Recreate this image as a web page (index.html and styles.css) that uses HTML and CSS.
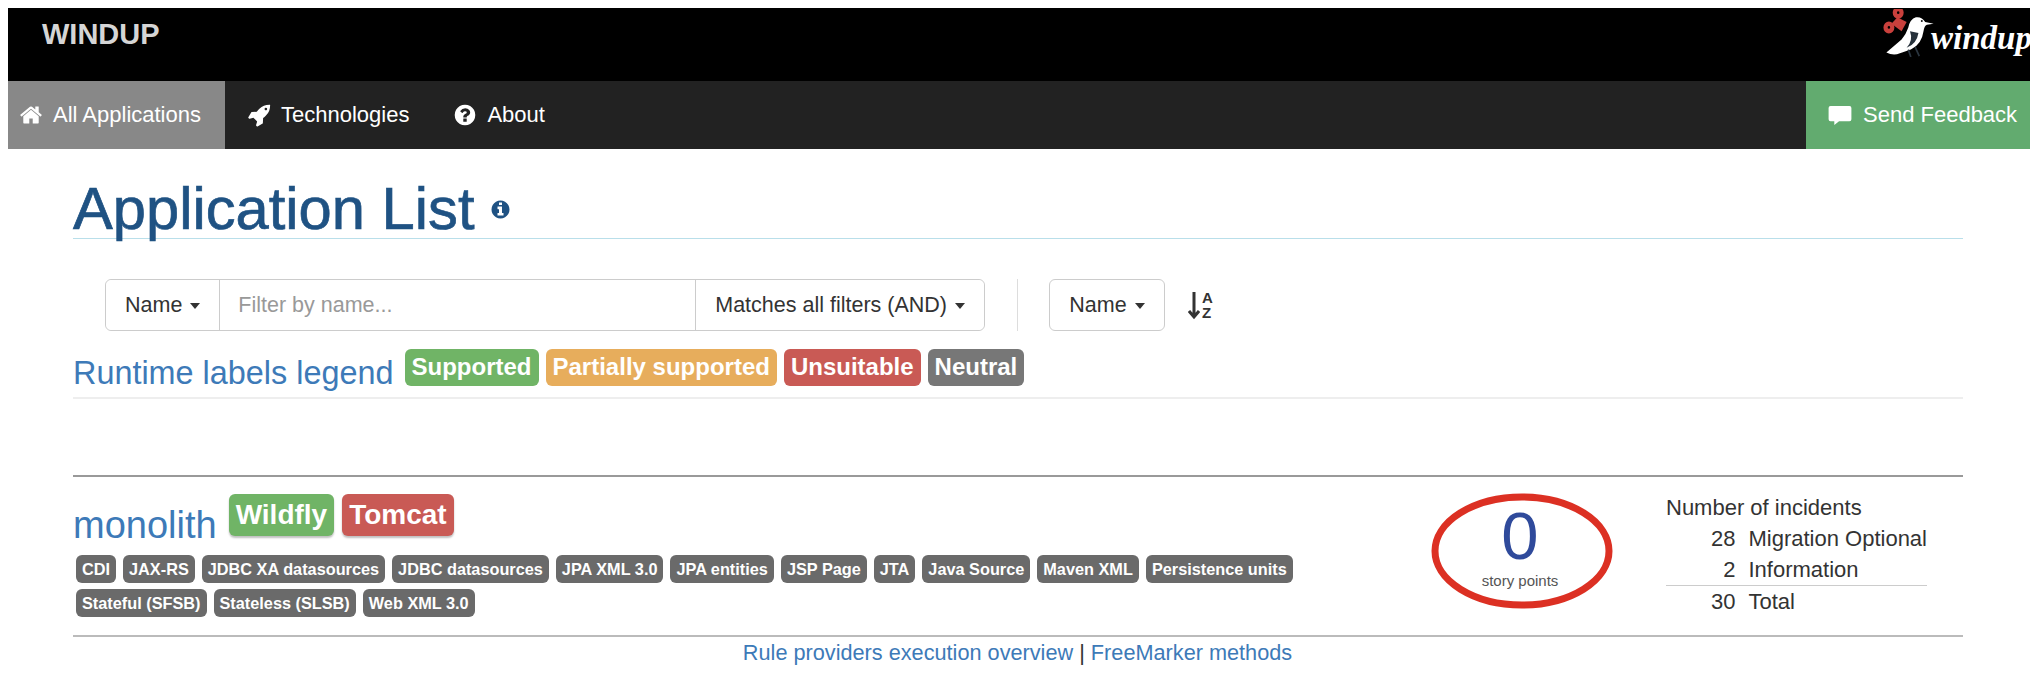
FILE: index.html
```html
<!DOCTYPE html>
<html lang="en">
<head>
    <meta charset="UTF-8">
    <title>Application List</title>
    <link rel="stylesheet" href="styles.css">
</head>
<body>
    <header class="topbar">
        <span class="brand">WINDUP</span>
        <div class="logo">
            <svg class="logo-bird" viewBox="0 0 64 52" width="54" height="48" preserveAspectRatio="none">
                <g fill="none" stroke="#c9403c" stroke-width="5">
                    <circle cx="18" cy="4" r="4"/>
                    <circle cx="7" cy="20" r="4"/>
                </g>
                <path d="M10 16 L17 9 L28 14 L22 24 Z" fill="#c9403c"/>
                <path d="M60 16 L50 14 Q46 8 39 9 Q32 11 30 20 Q27 28 22 33 L4 47 Q12 51 20 48 L33 44 Q46 38 48 24 Q49 18 52 17 Z" fill="#fff"/>
                <path d="M30 44 L33 52 M38 41 L43 51" stroke="#2b3640" stroke-width="2" fill="none"/>
                <path d="M32 24 Q36 34 28 42 Q40 38 42 26 Z" fill="#26313b"/>
                <circle cx="46" cy="13" r="1.2" fill="#111"/>
            </svg>
            <span class="logo-word">windup</span>
        </div>
    </header>

    <nav class="mainnav">
        <a class="nav-item active" href="#">
            <svg class="icon" viewBox="0 0 1792 1792"><path d="M1472 992v480q0 26-19 45t-45 19h-384v-384h-256v384h-384q-26 0-45-19t-19-45v-480q0-1 .5-3t.5-3l575-474 575 474q1 2 1 6zm223-69l-62 74q-8 9-21 11h-3q-13 0-21-7l-692-577-692 577q-12 8-24 7-13-2-21-11l-62-74q-8-10-7-23.500t11-21.500l719-599q32-26 76-26t76 26l244 204v-195q0-14 9-23t23-9h192q14 0 23 9t9 23v408l219 182q10 8 11 21.500t-7 23.500z"/></svg>
            All Applications
        </a>
        <a class="nav-item" href="#">
            <svg class="icon" viewBox="0 0 1792 1792"><path d="M1504 448q0-40-28-68t-68-28-68 28-28 68 28 68 68 28 68-28 28-68zm224-288q0 249-75.500 430.500t-253.500 360.500q-81 80-195 176l-20 379q-2 16-16 26l-384 224q-7 4-16 4-12 0-23-9l-64-64q-13-14-8-32l85-276-281-281-276 85q-3 1-9 1-14 0-23-9l-64-64q-17-19-5-39l224-384q10-14 26-16l379-20q96-114 176-195 188-187 358-258t431-71q14 0 24 9.500t10 22.500z"/></svg>
            Technologies
        </a>
        <a class="nav-item" href="#">
            <svg class="icon" viewBox="0 0 1792 1792"><path d="M1024 1376v-192q0-14-9-23t-23-9h-192q-14 0-23 9t-9 23v192q0 14 9 23t23 9h192q14 0 23-9t9-23zm256-672q0-88-55.500-163t-138.500-116-170-41q-243 0-371 213-15 24 8 42l132 100q7 6 19 6 16 0 25-12 53-68 86-92 34-24 86-24 48 0 85.500 26t37.500 59q0 38-20 61t-68 45q-63 28-115.500 86.500t-52.500 125.500v36q0 14 9 23t23 9h192q14 0 23-9t9-23q0-19 21.500-49.500t54.500-49.500q32-18 49-28.500t46-35 44.500-48 28-60.500 12.500-81zm384 192q0 209-103 385.500t-279.500 279.500-385.500 103-385.500-103-279.500-279.500-103-385.500 103-385.500 279.500-279.500 385.500-103 385.500 103 279.500 279.500 103 385.500z"/></svg>
            About
        </a>
        <a class="nav-item feedback" href="#">
            <svg class="icon" viewBox="0 0 24 20"><path d="M2 0h20a2 2 0 0 1 2 2v12a2 2 0 0 1-2 2H11l-5 4v-4H2a2 2 0 0 1-2-2V2a2 2 0 0 1 2-2z"/></svg>
            Send Feedback
        </a>
    </nav>

    <main class="content">
        <div class="page-header">
            <h1>Application List</h1>
            <svg class="info-icon" viewBox="0 0 1792 1792"><path d="M1152 1376v-160q0-14-9-23t-23-9h-96v-512q0-14-9-23t-23-9h-320q-14 0-23 9t-9 23v160q0 14 9 23t23 9h96v320h-96q-14 0-23 9t-9 23v160q0 14 9 23t23 9h448q14 0 23-9t9-23zm-128-896v-160q0-14-9-23t-23-9h-192q-14 0-23 9t-9 23v160q0 14 9 23t23 9h192q14 0 23-9t9-23zm640 416q0 209-103 385.500t-279.500 279.500-385.500 103-385.500-103-279.500-279.500-103-385.500 103-385.500 279.500-279.500 385.500-103 385.500 103 279.500 279.500 103 385.500z"/></svg>
        </div>

        <div class="toolbar">
            <div class="filter-group">
                <button class="btn">Name <span class="caret"></span></button>
                <input class="filter-input" type="text" placeholder="Filter by name...">
                <button class="btn">Matches all filters (AND) <span class="caret"></span></button>
            </div>
            <div class="divider"></div>
            <button class="btn single">Name <span class="caret"></span></button>
            <div class="sort-icon">
                <svg viewBox="0 0 12 30" width="12" height="30"><path d="M6 2v24M1 21l5 6 5-6" fill="none" stroke="#333" stroke-width="3"/></svg>
                <span class="sort-letters">A<br>Z</span>
            </div>
        </div>

        <div class="legend">
            <a class="legend-title" href="#">Runtime labels legend</a>
            <span class="label green">Supported</span>
            <span class="label orange">Partially supported</span>
            <span class="label red">Unsuitable</span>
            <span class="label grey">Neutral</span>
        </div>

        <div class="app-row">
            <div class="app-main">
                <div class="app-title">
                    <a class="app-name" href="#">monolith</a>
                    <span class="label big green">Wildfly</span>
                    <span class="label big red">Tomcat</span>
                </div>
                <div class="tags">
                    <span class="tag">CDI</span>
                    <span class="tag">JAX-RS</span>
                    <span class="tag">JDBC XA datasources</span>
                    <span class="tag">JDBC datasources</span>
                    <span class="tag">JPA XML 3.0</span>
                    <span class="tag">JPA entities</span>
                    <span class="tag">JSP Page</span>
                    <span class="tag">JTA</span>
                    <span class="tag">Java Source</span>
                    <span class="tag">Maven XML</span>
                    <span class="tag">Persistence units</span>
                    <span class="tag">Stateful (SFSB)</span>
                    <span class="tag">Stateless (SLSB)</span>
                    <span class="tag">Web XML 3.0</span>
                </div>
            </div>
            <div class="points">
                <span class="points-value">0</span>
                <span class="points-label">story points</span>
                <svg class="points-ring" viewBox="0 0 182 116" width="182" height="116"><ellipse cx="91" cy="58" rx="87" ry="54" fill="none" stroke="#dc3023" stroke-width="7"/></svg>
            </div>
            <div class="incidents">
                <div class="incidents-title">Number of incidents</div>
                <table>
                    <tr><td class="num">28</td><td>Migration Optional</td></tr>
                    <tr><td class="num">2</td><td>Information</td></tr>
                    <tr class="total"><td class="num">30</td><td>Total</td></tr>
                </table>
            </div>
        </div>

        <footer class="links">
            <a href="#">Rule providers execution overview</a> | <a href="#">FreeMarker methods</a>
        </footer>
    </main>
</body>
</html>
```

FILE: styles.css
```css
html, body {
    height: 666px;
    overflow: hidden;
}
body {
    margin: 8px 0 0 8px;
    font-family: "Liberation Sans", Arial, sans-serif;
    font-size: 22px;
    line-height: 1.43;
    color: #333;
    background-color: #fff;
}
a {
    color: #3d7ab8;
    text-decoration: none;
}

.topbar {
    height: 73px;
    background-color: #000;
    display: flex;
    justify-content: space-between;
    box-shadow: 0 -1px 0 #aaa;
}
.brand {
    margin: 11px 0 0 34px;
    font-size: 29px;
    line-height: 30px;
    font-weight: bold;
    color: #d5d5d5;
}
.logo {
    display: flex;
    align-items: flex-start;
    width: 140px;
    margin-right: 7px;
}
.logo-bird {
    flex-shrink: 0;
    margin-top: 1px;
}
.logo-word {
    margin: 12px 0 0 -6px;
    font-family: "Liberation Serif", serif;
    font-style: italic;
    font-weight: bold;
    font-size: 33px;
    line-height: 36px;
    color: #fff;
    white-space: nowrap;
}

.mainnav {
    height: 68px;
    background-color: #222;
    display: flex;
}
.nav-item {
    display: flex;
    align-items: center;
    padding: 0 22px;
    color: #fff;
    white-space: nowrap;
}
.nav-item .icon {
    flex-shrink: 0;
    width: 24px;
    height: 24px;
    margin-right: 10px;
    fill: #fff;
}
.nav-item.active {
    width: 217px;
    padding: 0 0 0 11px;
    box-sizing: border-box;
    background-color: #888;
}
.nav-item.feedback {
    margin-left: auto;
    width: 224px;
    box-sizing: border-box;
    background-color: #62ab6f;
}
.nav-item.feedback .icon {
    height: 19px;
    margin-right: 11px;
}

.content {
    width: 1890px;
    margin-left: 65px;
}
.page-header {
    display: flex;
    align-items: flex-end;
    height: 89px;
    border-bottom: 1px solid #b9dfea;
}
.page-header h1 {
    margin: 0 0 -2px;
    font-size: 59.7px;
    font-weight: normal;
    -webkit-text-stroke: 0.7px #1f5283;
    color: #1f5283;
    line-height: 62px;
}
.info-icon {
    width: 21px;
    height: 21px;
    margin: 0 0 18px 16px;
    fill: #1f5283;
}

.toolbar {
    display: flex;
    align-items: center;
    margin: 40px 0 0 32px;
    height: 52px;
}
.filter-group {
    display: flex;
    width: 880px;
    height: 52px;
    box-sizing: border-box;
    border: 1px solid #ccc;
    border-radius: 6px;
}
.btn {
    padding: 0 19px;
    border: none;
    background: #fff;
    font-family: inherit;
    font-size: 21.5px;
    color: #333;
    border-radius: 6px;
    white-space: nowrap;
}
.btn.single {
    width: 116px;
    height: 52px;
    padding: 0;
    border: 1px solid #ccc;
}
.caret {
    display: inline-block;
    margin-left: 2px;
    vertical-align: middle;
    border-top: 6px solid #333;
    border-left: 5px solid transparent;
    border-right: 5px solid transparent;
}
.filter-input {
    flex: 1;
    min-width: 0;
    padding: 0 18px;
    border: none;
    border-left: 1px solid #ccc;
    border-right: 1px solid #ccc;
    font-family: inherit;
    font-size: 21.5px;
    color: #333;
}
.filter-input::placeholder {
    color: #999;
}
.divider {
    width: 1px;
    height: 52px;
    margin: 0 31px 0 32px;
    background-color: #ddd;
}
.sort-icon {
    display: flex;
    align-items: center;
    margin-left: 23px;
    color: #333;
}
.sort-letters {
    margin-left: 2px;
    font-size: 15px;
    line-height: 15px;
    font-weight: bold;
}

.legend {
    display: flex;
    align-items: flex-start;
    gap: 7px;
    height: 48px;
    margin-top: 18px;
    border-bottom: 2px solid #eee;
}
.legend-title {
    font-size: 32.4px;
    line-height: 48px;
    margin-right: 4px;
}
.label {
    padding: 0 7px;
    height: 37px;
    line-height: 36px;
    font-size: 24px;
    font-weight: bold;
    color: #fff;
    border-radius: 6px;
}
.label.green { background-color: #70b466; }
.label.orange { background-color: #e7ad5c; }
.label.red { background-color: #c95a55; }
.label.grey { background-color: #777; }

.app-row {
    display: flex;
    height: 158px;
    margin-top: 76px;
    border-top: 2px solid #999;
    border-bottom: 2px solid #bbb;
}
.app-main {
    flex: 1;
    min-width: 0;
}
.app-title {
    display: flex;
    align-items: flex-start;
    gap: 8px;
    margin-top: 17px;
}
.app-name {
    font-size: 38px;
    line-height: 46px;
    margin-top: 8px;
    margin-right: 4px;
}
.label.big {
    height: 42px;
    line-height: 41px;
    font-size: 28px;
    padding: 0 7px;
    box-shadow: 0 2px 2px rgba(0, 0, 0, 0.25);
}
.tags {
    display: flex;
    flex-wrap: wrap;
    gap: 6px 7px;
    width: 1240px;
    margin: 7px 0 0 3px;
}
.tag {
    padding: 0 6px;
    height: 28px;
    line-height: 28px;
    font-size: 16.3px;
    font-weight: bold;
    color: #fff;
    background-color: #6a6a6a;
    border-radius: 6px;
    white-space: nowrap;
}

.points {
    position: relative;
    width: 200px;
    display: flex;
    flex-direction: column;
    align-items: center;
    margin-left: 46px;
}
.points-value {
    margin-top: 24px;
    font-size: 67px;
    line-height: 70px;
    color: #2f4a9b;
}
.points-label {
    font-size: 15px;
    line-height: 20px;
    color: #555;
}
/* hand drawn circle over the number */
.points-ring {
    position: absolute;
    left: 11px;
    top: 16px;
}

.incidents {
    width: 297px;
    margin-left: 46px;
    padding-top: 16px;
}
.incidents-title {
    line-height: 30px;
}
.incidents table {
    width: 261px;
    border-collapse: collapse;
}
.incidents td {
    padding: 0 0 0 13px;
    height: 31px;
    line-height: 31px;
    white-space: nowrap;
}
.incidents td.num {
    width: 70px;
    padding: 0;
    text-align: right;
}
.incidents .total td {
    border-top: 1px solid #ccc;
}

.links {
    text-align: center;
    margin: -1px 0 0 -1px;
    font-size: 21.7px;
    line-height: 34px;
}
```
